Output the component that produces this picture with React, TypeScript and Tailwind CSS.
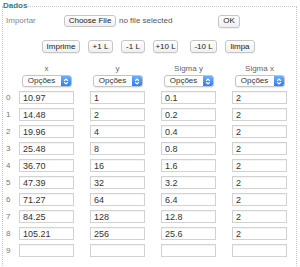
import React from 'react';

const xs = ['10.97', '14.48', '19.96', '25.48', '36.70', '47.39', '71.27', '84.25', '105.21', ''];
const ys = ['1', '2', '4', '8', '16', '32', '64', '128', '256', ''];
const sys = ['0.1', '0.2', '0.4', '0.8', '1.6', '3.2', '6.4', '12.8', '25.6', ''];
const sxs = ['2', '2', '2', '2', '2', '2', '2', '2', '2', ''];

function Btn({ label, w, className = '' }: { label: string; w: string; className?: string }) {
  return (
    <button
      className={`${w} ${className} flex h-[13px] items-center justify-center rounded-[3px] border border-[#c6c6c6] bg-gradient-to-b from-white to-[#efefef] text-[8px] leading-none text-[#222] shadow-[0_1px_0_rgba(0,0,0,0.05)]`}
    >
      {label}
    </button>
  );
}

function Select() {
  return (
    <div className="flex h-[12px] w-[50px] items-stretch overflow-hidden rounded-[3px] border border-[#c4c4c4] bg-white shadow-[0_1px_1px_rgba(0,0,0,0.08)]">
      <span className="flex flex-1 items-center justify-center text-[8px] leading-none text-[#333]">Opções</span>
      <span className="flex w-[10px] items-center justify-center bg-gradient-to-b from-[#6eadfb] to-[#2b7ff0]">
        <svg width="6" height="9" viewBox="0 0 6 9" fill="none" stroke="white" strokeWidth="1.1" strokeLinecap="round" strokeLinejoin="round">
          <path d="M1.5 3.5 L3 2 L4.5 3.5" />
          <path d="M1.5 5.5 L3 7 L4.5 5.5" />
        </svg>
      </span>
    </div>
  );
}

function Cell({ v }: { v: string }) {
  return (
    <div className="flex justify-center">
      <input
        defaultValue={v}
        className="h-[13px] w-[55px] border border-[#d2d2d2] bg-white px-[3px] text-[9px] leading-none text-[#333] shadow-[inset_0_1px_1px_rgba(0,0,0,0.05)] outline-none"
      />
    </div>
  );
}

export default function App() {
  return (
    <div className="h-[267px] w-[300px] bg-white font-['Liberation_Sans',Arial,sans-serif]">
      <fieldset className="ml-[2px] w-[295px] border border-dotted border-[#c4c4c4] pb-[10px]">
        <legend className="text-[8px] font-bold leading-[12px] text-[#32798a]">Dados</legend>

        {/* import row */}
        <div className="mt-[3px] flex h-[12px] items-center">
          <span className="w-[61px] pl-[3px] text-[8px] text-[#888]">Importar</span>
          <div className="flex w-[154px] items-center">
            <button className="flex h-[12px] w-[52px] items-center justify-center rounded-[3px] border border-[#c6c6c6] bg-gradient-to-b from-white to-[#efefef] text-[8px] leading-none text-[#222]">
              Choose File
            </button>
            <span className="ml-[3px] text-[8px] text-[#555]">no file selected</span>
          </div>
          <Btn label="OK" w="w-[22px]" />
        </div>

        {/* actions */}
        <div className="ml-[39px] mt-[13px] flex items-center">
          <Btn label="Imprime" w="w-[38px]" />
          <Btn label="+1 L" w="w-[25px]" className="ml-[8px]" />
          <Btn label="-1 L" w="w-[24px]" className="ml-[8px]" />
          <Btn label="+10 L" w="w-[25px]" className="ml-[8px]" />
          <Btn label="-10 L" w="w-[27px]" className="ml-[12px]" />
          <Btn label="limpa" w="w-[30px]" className="ml-[8px]" />
        </div>

        {/* table */}
        <div className="mt-[11px] grid grid-cols-[8px_repeat(4,71px)]">
          <div />
          {['x', 'y', 'Sigma y', 'Sigma x'].map((h) => (
            <div key={h} className="h-[10px] text-center text-[8px] leading-[10px] text-[#666]">
              {h}
            </div>
          ))}
        </div>
        <div className="mt-[1px] grid grid-cols-[8px_repeat(4,71px)]">
          <div />
          {[0, 1, 2, 3].map((i) => (
            <div key={i} className="flex justify-center">
              <Select />
            </div>
          ))}
        </div>
        <div className="mt-[4px] grid grid-cols-[8px_repeat(4,71px)] gap-y-[4px]">
          {xs.map((x, i) => (
            <React.Fragment key={i}>
              <div className="flex h-[13px] items-center pl-[3px] text-[8px] text-[#777]">{i}</div>
              <Cell v={x} />
              <Cell v={ys[i]} />
              <Cell v={sys[i]} />
              <Cell v={sxs[i]} />
            </React.Fragment>
          ))}
        </div>
      </fieldset>
    </div>
  );
}
